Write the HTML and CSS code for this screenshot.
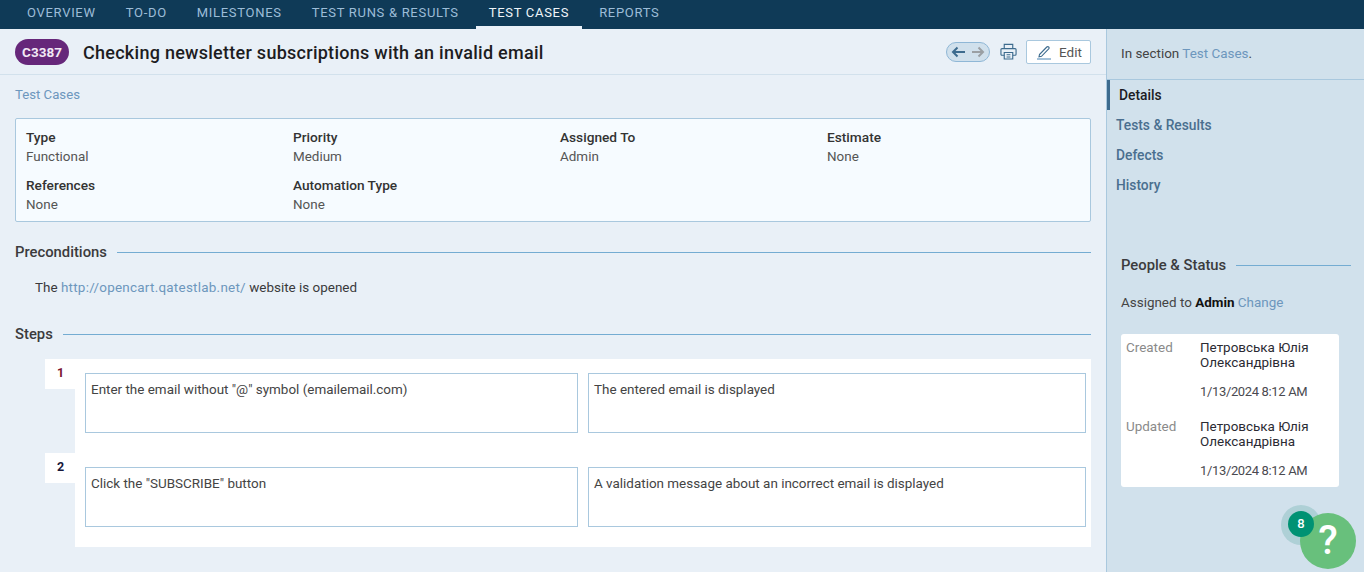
FILE: index.html
```html
<!DOCTYPE html>
<html lang="en">
<head>
<meta charset="utf-8">
<title>C3387</title>
<link rel="stylesheet" href="styles.css">
</head>
<body>
<nav class="tabs">
  <a class="tab">Overview</a><a class="tab">To-Do</a><a class="tab">Milestones</a><a class="tab">Test Runs &amp; Results</a><a class="tab active">Test Cases</a><a class="tab">Reports</a>
</nav>
<div class="page">
  <main class="main">
    <header class="head">
      <span class="badge">C3387</span>
      <h1 class="title">Checking newsletter subscriptions with an invalid email</h1>
      <div class="tools">
        <span class="pager">
          <svg width="15" height="12" viewBox="0 0 15 12"><path d="M14 6H2M6.500 1.500 2 6l4.500 4.500" fill="none" stroke="#3d6b8e" stroke-width="2"/></svg>
          <svg width="14" height="12" viewBox="0 0 14 12"><path d="M1 6h11M7.500 1.500 12 6l-4.500 4.500" fill="none" stroke="#9a9fa3" stroke-width="2"/></svg>
        </span>
        <svg class="print" width="17" height="17" viewBox="0 0 18 18" fill="none" stroke="#3d6b8e" stroke-width="1.200"><path d="M4.500 6V1.500h9V6M4.500 13H2a1 1 0 0 1-1-1V7a1 1 0 0 1 1-1h14a1 1 0 0 1 1 1v5a1 1 0 0 1-1 1h-2.500"/><path d="M4.500 10h9v7h-9zM7 12.500h4M7 14.800h4"/></svg>
        <button class="edit">
          <svg width="16" height="16" viewBox="0 0 16 16" fill="none" stroke="#3d6b8e" stroke-width="1.100"><path d="M3.500 10.500 10.800 3a1.300 1.300 0 0 1 1.900 0 1.300 1.300 0 0 1 0 1.900L5.500 12.300l-2.500.5z"/><path d="M1 15h14" stroke="#7ba7c9" stroke-width="1.400"/></svg>
          Edit
        </button>
      </div>
    </header>
    <div class="content">
      <a class="crumb">Test Cases</a>
      <section class="fields">
        <div class="field"><b>Type</b><span>Functional</span></div>
        <div class="field"><b>Priority</b><span>Medium</span></div>
        <div class="field"><b>Assigned To</b><span>Admin</span></div>
        <div class="field"><b>Estimate</b><span>None</span></div>
        <div class="field"><b>References</b><span>None</span></div>
        <div class="field"><b>Automation Type</b><span>None</span></div>
      </section>
      <h2 class="rule-head pre-head"><span>Preconditions</span></h2>
      <p class="pre">The <a class="pre-link">http://opencart.qatestlab.net/</a> website is opened</p>
      <h2 class="rule-head steps-head"><span>Steps</span></h2>
      <ol class="steps">
        <li class="step">
          <span class="num">1</span>
          <div class="cells">
            <div class="cell left">Enter the email without "@" symbol (emailemail.com)</div>
            <div class="cell right">The entered email is displayed</div>
          </div>
        </li>
        <li class="step">
          <span class="num">2</span>
          <div class="cells">
            <div class="cell left">Click the "SUBSCRIBE" button</div>
            <div class="cell right">A validation message about an incorrect email is displayed</div>
          </div>
        </li>
      </ol>
    </div>
  </main>
  <aside class="side">
    <div class="section-note">In section <a>Test Cases</a>.</div>
    <ul class="side-nav">
      <li class="on">Details</li>
      <li>Tests &amp; Results</li>
      <li>Defects</li>
      <li>History</li>
    </ul>
    <h2 class="rule-head people-head"><span>People &amp; Status</span></h2>
    <p class="assigned">Assigned to <b>Admin</b> <a>Change</a></p>
    <div class="meta">
      <div class="meta-row">
        <span class="meta-label">Created</span>
        <div class="meta-val"><span class="who">Петровська Юлія Олександрівна</span><span class="when">1/13/2024 8:12 AM</span></div>
      </div>
      <div class="meta-row">
        <span class="meta-label">Updated</span>
        <div class="meta-val"><span class="who">Петровська Юлія Олександрівна</span><span class="when">1/13/2024 8:12 AM</span></div>
      </div>
    </div>
  </aside>
</div>
<div class="help"><span class="halo"></span><span class="q">?</span><span class="count">8</span></div>
</body>
</html>
```
FILE: styles.css
```css
* { box-sizing: border-box; }
html, body { margin: 0; height: 100%; overflow: hidden; }
body { font-family: Roboto, "Liberation Sans", sans-serif; font-size: 13.450px; color: #333; background: #e9f0f7; }
a { color: #6d97bd; }
.tabs { display: flex; gap: 4px; height: 29px; padding-left: 14px; background: #0f3a57; }
.tab { height: 29px; padding: 5px 13px 0; font-size: 13px; line-height: 15px; letter-spacing: .7px; text-transform: uppercase; color: #9dbdd8; white-space: nowrap; }
.tab.active { color: #eef4f9; border-bottom: 3px solid #eaf1f8; }
.page { display: flex; height: 543px; }
.main { width: 1106px; flex: none; }
.head { display: flex; align-items: center; height: 46px; padding: 0 15px; border-bottom: 1px solid #d2e1ec; }
.badge { width: 54px; height: 26px; border-radius: 13px; background: #66277a; color: #f2e9f5; font-size: 13.500px; font-weight: 700; line-height: 26px; text-align: center; }
.title { margin: 2px 0 0 14px; font-size: 18px; font-weight: 500; letter-spacing: .27px; color: #1d1d1f; white-space: nowrap; }
.tools { display: flex; align-items: center; margin-left: auto; }
.pager { display: flex; align-items: center; justify-content: center; gap: 5px; width: 44px; height: 20px; border: 1px solid #8fb7d6; border-radius: 10px; background: #d0e0ec; }
.print { margin-left: 10px; }
.edit { display: flex; align-items: center; gap: 7px; width: 65px; height: 24px; margin-left: 9px; padding: 0 0 0 9px; border: 1px solid #a9c8de; border-radius: 2px; background: #fff; font: 13.500px Roboto, sans-serif; color: #555; }
.content { padding: 0 15px; }
.crumb { display: block; margin-top: 12px; height: 15px; line-height: 15px; font-size: 13.200px; }
.fields { display: grid; grid-template-columns: repeat(4, 267px); row-gap: 10px; height: 104px; margin-top: 16px; padding: 9px 10px; border: 1px solid #a9c8de; border-radius: 2px; background: #f6fbff; }
.field b { display: block; height: 20px; font-size: 13.700px; font-weight: 500; line-height: 18px; color: #333; }
.field span { display: block; height: 18px; line-height: 18px; color: #555; }
.rule-head { display: flex; align-items: center; gap: 10px; margin: 0; height: 18px; font-size: 14.800px; font-weight: 500; line-height: 18px; color: #3b3b3d; }
.rule-head::after { content: ""; flex: 1; height: 1px; background: #74acd2; }
.pre-head { margin-top: 21px; }
.pre { margin: 18px 0 0 20px; height: 18px; line-height: 18px; color: #3a3a3c; }
.pre-link { letter-spacing: .25px; }
.steps-head { margin-top: 28px; }
.steps { display: block; margin: 16px 0 0 30px; padding: 0; list-style: none; }
.step { display: flex; height: 94px; }
.num { flex: none; width: 30px; height: 30px; padding: 6px 0 0 12px; background: #fff; font-size: 12.500px; font-weight: 700; line-height: 16px; color: #7a1230; }
.step + .step .num { color: #18183a; }
.cells { display: flex; flex: 1; gap: 10px; height: 94px; padding: 14px 5px 0 10px; background: #fff; }
.cell { height: 60px; padding: 7px 5px; border: 1px solid #a9c8de; line-height: 18px; color: #444; white-space: nowrap; }
.left { width: 493px; }
.right { width: 498px; }
.side { flex: 1; border-left: 1px solid #a9c8de; background: #d1e1ec; }
.section-note { height: 51px; padding: 17px 14px 0; border-bottom: 1px solid #a9c8de; line-height: 16px; color: #444; }
.side-nav { margin: 0; padding: 0; list-style: none; }
.side-nav li { height: 30px; padding-left: 9px; font-size: 13.800px; font-weight: 500; line-height: 30px; color: #4a6f8f; }
.side-nav .on { padding-left: 9px; border-left: 3px solid #3d6b8e; color: #1c1c24; }
.people-head { margin: 56px 13px 0 14px; }
.assigned { margin: 20px 0 0 14px; height: 18px; line-height: 18px; color: #444; }
.assigned b { font-weight: 700; color: #111; }
.meta { width: 218px; height: 153px; margin: 22px 0 0 14px; padding: 6px 5px; border-radius: 3px; background: #fff; }
.meta-row { display: flex; height: 79px; }
.meta-label { flex: none; width: 74px; line-height: 15px; color: #8a8a8a; }
.meta-val { line-height: 15px; color: #2b2b33; }
.who { display: block; height: 44px; }
.when { display: block; font-size: 13px; letter-spacing: -.35px; color: #4a4a50; }
.help { position: absolute; left: 1281px; top: 504px; width: 75px; height: 65px; }
.halo { position: absolute; left: 0; top: 1px; width: 40px; height: 40px; border-radius: 50%; background: #aed0d6; }
.q { position: absolute; left: 19px; top: 9px; width: 56px; height: 56px; border-radius: 50%; background: #68c07c; color: #fff; font-size: 40px; font-weight: 500; line-height: 56px; text-align: center; }
.count { position: absolute; left: 7px; top: 7px; width: 26px; height: 26px; border-radius: 50%; background: #009273; color: #fff; font-size: 13px; font-weight: 500; line-height: 26px; text-align: center; }
```
